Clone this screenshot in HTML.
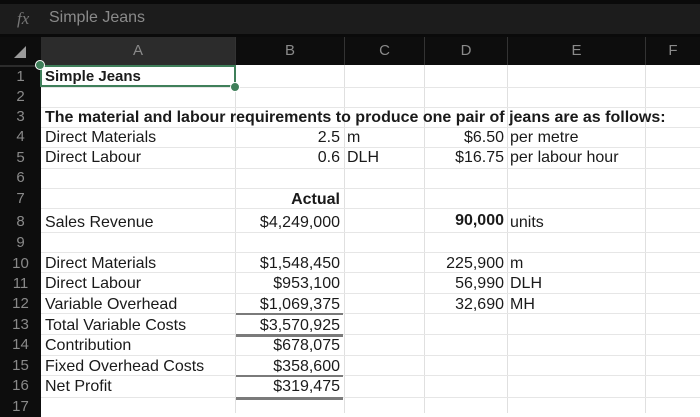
<!DOCTYPE html>
<html><head><meta charset="utf-8"><style>
*{margin:0;padding:0;box-sizing:border-box}
body{width:700px;height:413px;overflow:hidden;background:#fff;font-family:"Liberation Sans",sans-serif;position:relative}
.a{position:absolute;white-space:nowrap}
.fb{left:0;top:0;width:700px;height:37px;background:#0a0a0a}
.fbin{left:0;top:4px;width:700px;height:30px;background:#1c1c1c}
.hdr{top:37px;height:28px;background:#0d0d0d;color:#8a8a8a;font-size:15px;line-height:28px;text-align:center}
.rh{left:0;width:41px;background:#0d0d0d;color:#8a8a8a;font-size:15px;text-align:center}
.v{position:absolute;top:65px;height:348px;width:1px;background:#e0e0e0}
.h{position:absolute;left:41px;width:659px;height:1px;background:#e6e6e6}
.t{position:absolute;white-space:nowrap;font-size:16px;color:#1a1a1a}
.r{text-align:right}
.b{font-weight:bold}
.u{position:absolute;left:236px;width:107px;background:#7a7a7a}
</style></head><body>
<div class="a fb"></div><div class="a fbin"></div>
<div class="a" style="left:17px;top:9px;color:#777;font-family:'Liberation Serif',serif;font-style:italic;font-size:17px">fx</div>
<div class="a" style="left:49px;top:9px;color:#8a8a8a;font-size:16px">Simple Jeans</div>
<div class="a" style="left:0;top:37px;width:700px;height:28px;background:#0d0d0d"></div>
<div class="a hdr" style="left:41px;width:194px;background:#2c2c2c">A</div>
<div class="a hdr" style="left:235px;width:109px;border-left:1px solid #333">B</div>
<div class="a hdr" style="left:344px;width:80px;border-left:1px solid #333">C</div>
<div class="a hdr" style="left:424px;width:83px;border-left:1px solid #333">D</div>
<div class="a hdr" style="left:507px;width:138px;border-left:1px solid #333">E</div>
<div class="a hdr" style="left:645px;width:55px;border-left:1px solid #333">F</div>
<svg class="a" style="left:13px;top:45px" width="14" height="14"><polygon points="13,1 13,13 1,13" fill="#9a9a9a"/></svg>
<div class="a" style="left:0;top:65px;width:41px;height:348px;background:#0d0d0d"></div>
<div class="a" style="left:0;top:65px;width:41px;height:22px;background:#2c2c2c"></div>

<div class="v" style="left:235px"></div><div class="v" style="left:344px"></div><div class="v" style="left:424px"></div><div class="v" style="left:507px"></div><div class="v" style="left:645px"></div>
<div class="h" style="top:87px"></div><div class="h" style="top:107px"></div><div class="h" style="top:127px"></div><div class="h" style="top:147px"></div><div class="h" style="top:168px"></div><div class="h" style="top:188px"></div><div class="h" style="top:208px"></div><div class="h" style="top:232px"></div><div class="h" style="top:252px"></div><div class="h" style="top:272px"></div><div class="h" style="top:293px"></div><div class="h" style="top:313px"></div><div class="h" style="top:334px"></div><div class="h" style="top:355px"></div><div class="h" style="top:375px"></div><div class="h" style="top:397px"></div>

<div class="a rh" style="top:67px;height:20px;line-height:20px">1</div>
<div class="a rh" style="top:87px;height:20px;line-height:20px">2</div>
<div class="a rh" style="top:107px;height:20px;line-height:20px">3</div>
<div class="a rh" style="top:127px;height:20px;line-height:20px">4</div>
<div class="a rh" style="top:148px;height:20px;line-height:20px">5</div>
<div class="a rh" style="top:168px;height:20px;line-height:20px">6</div>
<div class="a rh" style="top:189px;height:20px;line-height:20px">7</div>
<div class="a rh" style="top:212px;height:20px;line-height:20px">8</div>
<div class="a rh" style="top:233px;height:20px;line-height:20px">9</div>
<div class="a rh" style="top:254px;height:20px;line-height:20px">10</div>
<div class="a rh" style="top:274px;height:20px;line-height:20px">11</div>
<div class="a rh" style="top:294px;height:20px;line-height:20px">12</div>
<div class="a rh" style="top:315px;height:20px;line-height:20px">13</div>
<div class="a rh" style="top:335px;height:20px;line-height:20px">14</div>
<div class="a rh" style="top:356px;height:20px;line-height:20px">15</div>
<div class="a rh" style="top:376px;height:20px;line-height:20px">16</div>
<div class="a rh" style="top:397px;height:20px;line-height:20px">17</div>

<div class="a" style="left:40px;top:65px;width:196px;height:22px;border:2px solid #3f7f5a"></div>
<div class="a" style="left:35px;top:60px;width:10px;height:10px;border-radius:50%;background:#3f7f5a;border:1px solid #fff"></div>
<div class="a" style="left:230px;top:82px;width:10px;height:10px;border-radius:50%;background:#3f7f5a;border:1px solid #fff"></div>

<div class="t b" style="left:45px;top:68px;font-size:15px">Simple Jeans</div>
<div class="t b" style="left:45px;top:109px;font-size:16px">The material and labour requirements to produce one pair of jeans are as follows:</div>
<div class="t" style="left:45px;top:129px">Direct Materials</div>
<div class="t r" style="left:235px;width:105px;top:129px">2.5</div>
<div class="t" style="left:347px;top:129px">m</div>
<div class="t r" style="left:424px;width:80px;top:129px">$6.50</div>
<div class="t" style="left:510px;top:129px">per metre</div>
<div class="t" style="left:45px;top:149px">Direct Labour</div>
<div class="t r" style="left:235px;width:105px;top:149px">0.6</div>
<div class="t" style="left:347px;top:149px">DLH</div>
<div class="t r" style="left:424px;width:80px;top:149px">$16.75</div>
<div class="t" style="left:510px;top:149px">per labour hour</div>
<div class="t b r" style="left:235px;width:105px;top:191px">Actual</div>
<div class="t" style="left:45px;top:214px">Sales Revenue</div>
<div class="t r" style="left:235px;width:105px;top:214px">$4,249,000</div>
<div class="t b r" style="left:424px;width:80px;top:212px">90,000</div>
<div class="t" style="left:510px;top:214px">units</div>
<div class="t" style="left:45px;top:255px">Direct Materials</div>
<div class="t r" style="left:235px;width:105px;top:255px">$1,548,450</div>
<div class="t r" style="left:424px;width:80px;top:255px">225,900</div>
<div class="t" style="left:510px;top:255px">m</div>
<div class="t" style="left:45px;top:275px">Direct Labour</div>
<div class="t r" style="left:235px;width:105px;top:275px">$953,100</div>
<div class="t r" style="left:424px;width:80px;top:275px">56,990</div>
<div class="t" style="left:510px;top:275px">DLH</div>
<div class="t" style="left:45px;top:296px">Variable Overhead</div>
<div class="t r" style="left:235px;width:105px;top:296px">$1,069,375</div>
<div class="t r" style="left:424px;width:80px;top:296px">32,690</div>
<div class="t" style="left:510px;top:296px">MH</div>
<div class="t" style="left:45px;top:317px">Total Variable Costs</div>
<div class="t r" style="left:235px;width:105px;top:317px">$3,570,925</div>
<div class="t" style="left:45px;top:337px">Contribution</div>
<div class="t r" style="left:235px;width:105px;top:337px">$678,075</div>
<div class="t" style="left:45px;top:358px">Fixed Overhead Costs</div>
<div class="t r" style="left:235px;width:105px;top:358px">$358,600</div>
<div class="t" style="left:45px;top:378px">Net Profit</div>
<div class="t r" style="left:235px;width:105px;top:378px">$319,475</div>

<div class="u" style="top:313px;height:2px"></div>
<div class="u" style="top:334px;height:3px"></div>
<div class="u" style="top:375px;height:2px"></div>
<div class="u" style="top:397px;height:3px"></div>
</body></html>
